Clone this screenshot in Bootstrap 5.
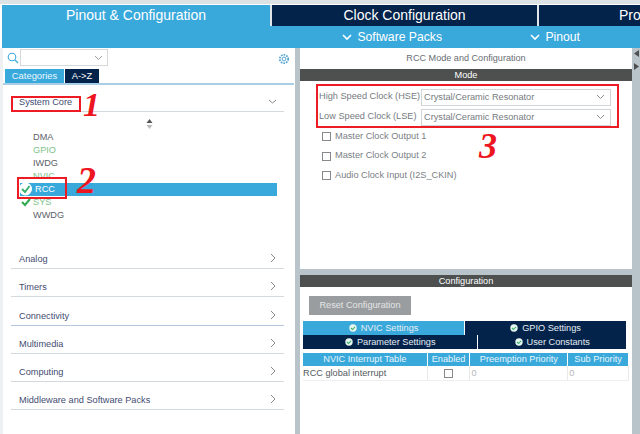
<!DOCTYPE html>
<html lang="en">
<head>
<meta charset="utf-8">
<title>RCC Mode and Configuration</title>
<link rel="stylesheet" href="https://cdn.jsdelivr.net/npm/bootstrap@5.3.0/dist/css/bootstrap.min.css">
<style>
html,body{margin:0;height:434px;overflow:hidden;background:#fff}
body{width:640px;font-family:"Liberation Sans",Arial,sans-serif;font-size:9.1px;color:#5a5f66;position:relative}
.cube-top{height:5px;background:#fff;border-top:4px solid #dde2e5}
.cube-tabs{height:21px;padding-left:2px}
.cube-tab{background:#03234b;color:#fff;font-size:14px;line-height:21px;text-align:center;border-left:2px solid #dfe5e8;overflow:hidden;white-space:nowrap}
.cube-tab.on{background:#39a9dc;border-left:0}
.t1{width:268px}.t2{width:267px}.t3{flex:1;text-align:left;padding-left:80px}
.cube-sub{height:22px;background:#39a9dc;color:#fff;font-size:12.2px;line-height:22px;margin-left:2px}
.cube-sub svg{margin-right:2px}
.sub-pack{margin-left:340px;width:188px}
.cube-main{height:386px;background:#b9c4ca}
.cube-left{width:295px;background:#fff;margin-right:5px;padding-top:1px;border-left:3px solid #eef0f1}
.cube-right{width:332px}
.cube-strip{width:8px;padding:2px 0 0 2px}
.cube-strip svg{display:block;margin-bottom:6px}
.finder{height:20px;padding:0 5px 0 4px}
.finder-box{width:88px;height:17px;border:1px solid #d5d8da;margin-left:1px;padding-right:4px}
.mini-tabs{height:14px;padding-left:2px}
.mini-tab{height:14px;line-height:14px;font-size:9.4px;color:#fff;text-align:center;background:#03234b}
.mini-tab.on{background:#39a9dc;width:59px;margin-right:1px;color:#e9f6fc}
.mini-tab.off{width:34px}
.left-rule{height:2px;background:#a9cfe6;margin-bottom:7px;margin-right:1px}
.cat{height:28.25px;margin:0 11px 0 8px;border-bottom:1px solid #d4d9dd;font-size:9.2px;color:#444c72;padding:0 7px 1px 8px;align-items:flex-end}
.cat.first{height:20px}
.cat.link{border-color:#b4c6de}
.sorter{height:18.5px;text-align:center;padding-top:7px;line-height:0}
.subs{font-size:9.2px;line-height:13px;padding-left:30px;margin-right:18px;height:92px}
.subs div{height:13px}
.green{color:#7cc48a}
.grey{color:#5d6168}
.sel{background:#39a9dc;color:#fff;margin-left:-13px;padding-left:15px;width:257px}
.spacer{height:18.25px}
.upper{height:221px;background:#fff}
.rtitle{height:21px;line-height:20px;text-align:center;font-size:9.1px;color:#686d73}
.bar{background:#4e504f;color:#fff;text-align:center;font-size:9.2px;line-height:12px;height:12px}
.sel-row{height:20px;padding-left:19px;font-size:9.2px;color:#767b80}
.sel-row .lab{width:102px;white-space:nowrap}
.combo{width:190px;height:17px;border:1px solid #d2d5d7;line-height:15px;padding:0 5px 0 2px;color:#767b80}
.mode-sel{padding-top:6px}
.chk{height:19.4px;padding-left:22px;color:#7b8085;font-size:9.2px;gap:4px}
.box{width:9px;height:9px;border:1px solid #85898c;background:#fff;flex:none}
.gut{height:6px;background:#b9c4ca}
.lower{height:159px;background:#fff}
.reset{display:block;width:102px;height:19px;margin:9px 0 6px 9px;background:#9a9d9f;color:#e3e5e6;font-size:9.2px;line-height:19px;text-align:center;border:0;border-radius:0;padding:0}
.stab{height:14px;line-height:14px;background:#03234b;color:#e6edf3;font-size:9.2px;text-align:center;border-right:1px solid #fff;gap:4px;display:flex;align-items:center;justify-content:center}
.stab.on{background:#39a9dc}
.stabs{margin:0 5px 0 3px}
.w1{width:162px}.w2{width:162px}.w3{width:176px}.w4{width:149px}
.ih{height:13px;line-height:13px;background:#39a9dc;color:#e8f5fb;font-size:9.2px;text-align:center;border-right:1px solid #fff;white-space:nowrap}
.c1{width:125px}.c2{width:43px}.c3{width:98px}.c4{width:61px}
.irows{margin:4px 3px 0 3px;font-size:9.2px}
.ir{height:14px;line-height:14px;border-right:1px solid #e8e9ea;color:#555a60;white-space:nowrap}
.ir.zero{padding-left:1px;color:#b5b8ba}
.irow{border-bottom:1px solid #eceef0}
.ink{position:absolute;border:2px solid #ed1c24;pointer-events:none}
.ink-num{position:absolute;color:#ed1520;font-family:"Liberation Serif",serif;font-style:italic;font-weight:700;line-height:1;pointer-events:none}
</style>
</head>
<body>
<div class="cube-top"></div>
<div class="cube-tabs d-flex">
  <div class="cube-tab on t1">Pinout &amp; Configuration</div>
  <div class="cube-tab t2">Clock Configuration</div>
  <div class="cube-tab t3">Pro</div>
</div>
<div class="cube-sub d-flex">
  <div class="sub-pack"><svg width="10" height="7" viewBox="0 0 10 7"><path d="M1 1l4 4 4-4" fill="none" stroke="#fff" stroke-width="1.6"/></svg> Software Packs</div>
  <div><svg width="10" height="7" viewBox="0 0 10 7"><path d="M1 1l4 4 4-4" fill="none" stroke="#fff" stroke-width="1.6"/></svg> Pinout</div>
</div>
<div class="cube-main d-flex">
  <div class="cube-left">
    <div class="finder d-flex align-items-start justify-content-between">
      <div class="d-flex align-items-center">
        <svg width="12" height="12" viewBox="0 0 12 12"><circle cx="5" cy="5" r="3.8" fill="none" stroke="#39a9dc" stroke-width="1.1"/><path d="M8 8l3 3" stroke="#39a9dc" stroke-width="1.3"/></svg>
        <div class="finder-box d-flex align-items-center justify-content-end"><svg width="9" height="6" viewBox="0 0 9 6"><path d="M1 1l3.5 3.5L8 1" fill="none" stroke="#9aa0a4"/></svg></div>
      </div>
      <svg width="12" height="12" viewBox="0 0 12 12" class="mt-1"><circle cx="6" cy="6" r="1.9" fill="none" stroke="#5aa7cf"/><circle cx="6" cy="6" r="4.2" fill="none" stroke="#5aa7cf" stroke-width="1.8" stroke-dasharray="1.7 1"/></svg>
    </div>
    <div class="mini-tabs d-flex"><div class="mini-tab on">Categories</div><div class="mini-tab off">A-&gt;Z</div></div>
    <div class="left-rule"></div>
    <div class="cat first d-flex justify-content-between"><span>System Core</span><svg width="9" height="9" viewBox="0 0 9 9" class="mb-1"><path d="M1 3l3.5 3L8 3" fill="none" stroke="#858a8f"/></svg></div>
    <div class="sorter"><svg width="7" height="10" viewBox="0 0 7 10"><path d="M3.5 0L6.5 4H.5z" fill="#555"/><path d="M3.5 10L6.5 6H.5z" fill="#bbb"/></svg></div>
    <div class="subs">
      <div class="grey">DMA</div>
      <div class="green">GPIO</div>
      <div class="grey">IWDG</div>
      <div class="green">NVIC</div>
      <div class="sel">RCC</div>
      <div class="green">SYS</div>
      <div class="grey">WWDG</div>
    </div>
    <div class="spacer"></div>
    <div class="cat d-flex justify-content-between"><span>Analog</span><svg width="9" height="10" viewBox="0 0 9 10" class="mb-1"><path d="M3 1l4 4-4 4" fill="none" stroke="#858a8f"/></svg></div>
    <div class="cat d-flex justify-content-between"><span>Timers</span><svg width="9" height="10" viewBox="0 0 9 10" class="mb-1"><path d="M3 1l4 4-4 4" fill="none" stroke="#858a8f"/></svg></div>
    <div class="cat link d-flex justify-content-between"><span>Connectivity</span><svg width="9" height="10" viewBox="0 0 9 10" class="mb-1"><path d="M3 1l4 4-4 4" fill="none" stroke="#858a8f"/></svg></div>
    <div class="cat d-flex justify-content-between"><span>Multimedia</span><svg width="9" height="10" viewBox="0 0 9 10" class="mb-1"><path d="M3 1l4 4-4 4" fill="none" stroke="#858a8f"/></svg></div>
    <div class="cat d-flex justify-content-between"><span>Computing</span><svg width="9" height="10" viewBox="0 0 9 10" class="mb-1"><path d="M3 1l4 4-4 4" fill="none" stroke="#858a8f"/></svg></div>
    <div class="cat d-flex justify-content-between"><span>Middleware and Software Packs</span><svg width="9" height="10" viewBox="0 0 9 10" class="mb-1"><path d="M3 1l4 4-4 4" fill="none" stroke="#858a8f"/></svg></div>
  </div>
  <div class="cube-right">
    <div class="upper">
      <div class="rtitle">RCC Mode and Configuration</div>
      <div class="bar">Mode</div>
      <div class="mode-sel">
        <div class="sel-row d-flex align-items-center"><div class="lab">High Speed Clock (HSE)</div><div class="combo d-flex justify-content-between align-items-center">Crystal/Ceramic Resonator<svg width="9" height="6" viewBox="0 0 9 6"><path d="M1 1l3.5 3.5L8 1" fill="none" stroke="#8a8f93"/></svg></div></div>
        <div class="sel-row d-flex align-items-center"><div class="lab">Low Speed Clock (LSE)</div><div class="combo d-flex justify-content-between align-items-center">Crystal/Ceramic Resonator<svg width="9" height="6" viewBox="0 0 9 6"><path d="M1 1l3.5 3.5L8 1" fill="none" stroke="#8a8f93"/></svg></div></div>
      </div>
      <div class="chk d-flex align-items-center"><span class="box"></span>Master Clock Output 1</div>
      <div class="chk d-flex align-items-center"><span class="box"></span>Master Clock Output 2</div>
      <div class="chk d-flex align-items-center"><span class="box"></span>Audio Clock Input (I2S_CKIN)</div>
    </div>
    <div class="gut"></div>
    <div class="lower">
      <div class="bar">Configuration</div>
      <button type="button" class="btn reset">Reset Configuration</button>
      <div class="stabs">
        <div class="d-flex"><div class="stab on w1"><svg width="8" height="8" viewBox="0 0 8 8"><circle cx="4" cy="4" r="3.7" fill="#e8f6f0"/><path d="M2 4l1.5 1.5L6 2.8" fill="none" stroke="#3bb273" stroke-width="1.1"/></svg>NVIC Settings</div><div class="stab w2 flex-grow-1"><svg width="8" height="8" viewBox="0 0 8 8"><circle cx="4" cy="4" r="3.7" fill="#e8f6f0"/><path d="M2 4l1.5 1.5L6 2.8" fill="none" stroke="#3bb273" stroke-width="1.1"/></svg>GPIO Settings</div></div>
        <div class="d-flex"><div class="stab w3"><svg width="8" height="8" viewBox="0 0 8 8"><circle cx="4" cy="4" r="3.7" fill="#e8f6f0"/><path d="M2 4l1.5 1.5L6 2.8" fill="none" stroke="#3bb273" stroke-width="1.1"/></svg>Parameter Settings</div><div class="stab w4 flex-grow-1"><svg width="8" height="8" viewBox="0 0 8 8"><circle cx="4" cy="4" r="3.7" fill="#e8f6f0"/><path d="M2 4l1.5 1.5L6 2.8" fill="none" stroke="#3bb273" stroke-width="1.1"/></svg>User Constants</div></div>
      </div>
      <div class="irows">
        <div class="d-flex"><div class="ih c1">NVIC Interrupt Table</div><div class="ih c2">Enabled</div><div class="ih c3">Preemption Priority</div><div class="ih c4">Sub Priority</div></div>
        <div class="d-flex irow"><div class="ir c1">RCC global interrupt</div><div class="ir c2 d-flex align-items-center justify-content-center"><span class="box"></span></div><div class="ir c3 zero">0</div><div class="ir c4 zero">0</div></div>
      </div>
    </div>
  </div>
  <div class="cube-strip">
    <svg width="5" height="7" viewBox="0 0 5 7"><path d="M5 0v7L0 3.5z" fill="#4e504f"/></svg>
    <svg width="5" height="7" viewBox="0 0 5 7"><path d="M0 0v7l5-3.5z" fill="#4e504f"/></svg>
  </div>
</div>

<svg class="position-absolute" style="left:17px;top:181px" width="18" height="15" viewBox="0 0 18 15"><circle cx="8.5" cy="8" r="6.5" fill="#fff"/><path d="M5 8l3 3 4.5-6" fill="none" stroke="#3bb273" stroke-width="2"/></svg>
<svg class="position-absolute" style="left:21px;top:198px" width="10" height="9" viewBox="0 0 10 9"><path d="M1 4l3 3 5-6" fill="none" stroke="#2fa84f" stroke-width="2"/></svg>

<div class="ink" style="left:11px;top:96px;width:70px;height:16px"></div>
<div class="ink" style="left:17px;top:177px;width:50px;height:22px"></div>
<div class="ink" style="left:316px;top:84px;width:303px;height:44px"></div>
<div class="ink-num" style="left:83px;top:88px;font-size:34px">1</div>
<div class="ink-num" style="left:77px;top:161px;font-size:38px">2</div>
<div class="ink-num" style="left:479px;top:128px;font-size:36px">3</div>
<script src="https://cdn.jsdelivr.net/npm/bootstrap@5.3.0/dist/js/bootstrap.bundle.min.js"></script>
</body>
</html>
